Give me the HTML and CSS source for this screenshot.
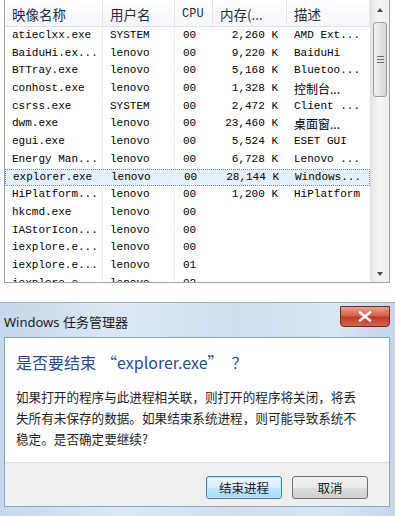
FILE: index.html
```html
<!DOCTYPE html>
<html lang="zh-CN">
<head>
    <meta charset="UTF-8">
    <meta name="viewport" content="width=device-width, initial-scale=1.0">
    <title>Windows 任务管理器</title>
    <link rel="stylesheet" href="styles.css">
</head>
<body>
    <!-- Process list -->
    <div class="process-list">
        <div class="grid">
            <div class="row header">
                <div class="cell">映像名称</div>
                <div class="cell">用户名</div>
                <div class="cell">CPU</div>
                <div class="cell">内存(...</div>
                <div class="cell">描述</div>
            </div>
            <div class="row"><div class="cell name">atieclxx.exe</div><div class="cell user">SYSTEM</div><div class="cell cpu">00</div><div class="cell mem">2,260 K</div><div class="cell desc">AMD Ext...</div></div>
            <div class="row"><div class="cell name">BaiduHi.ex...</div><div class="cell user">lenovo</div><div class="cell cpu">00</div><div class="cell mem">9,220 K</div><div class="cell desc">BaiduHi</div></div>
            <div class="row"><div class="cell name">BTTray.exe</div><div class="cell user">lenovo</div><div class="cell cpu">00</div><div class="cell mem">5,168 K</div><div class="cell desc">Bluetoo...</div></div>
            <div class="row"><div class="cell name">conhost.exe</div><div class="cell user">lenovo</div><div class="cell cpu">00</div><div class="cell mem">1,328 K</div><div class="cell desc cjk">控制台...</div></div>
            <div class="row"><div class="cell name">csrss.exe</div><div class="cell user">SYSTEM</div><div class="cell cpu">00</div><div class="cell mem">2,472 K</div><div class="cell desc">Client ...</div></div>
            <div class="row"><div class="cell name">dwm.exe</div><div class="cell user">lenovo</div><div class="cell cpu">00</div><div class="cell mem">23,460 K</div><div class="cell desc cjk">桌面窗...</div></div>
            <div class="row"><div class="cell name">egui.exe</div><div class="cell user">lenovo</div><div class="cell cpu">00</div><div class="cell mem">5,524 K</div><div class="cell desc">ESET GUI</div></div>
            <div class="row"><div class="cell name">Energy Man...</div><div class="cell user">lenovo</div><div class="cell cpu">00</div><div class="cell mem">6,728 K</div><div class="cell desc">Lenovo ...</div></div>
            <div class="row selected"><div class="cell name">explorer.exe</div><div class="cell user">lenovo</div><div class="cell cpu">00</div><div class="cell mem">28,144 K</div><div class="cell desc">Windows...</div></div>
            <div class="row"><div class="cell name">HiPlatform...</div><div class="cell user">lenovo</div><div class="cell cpu">00</div><div class="cell mem">1,200 K</div><div class="cell desc">HiPlatform</div></div>
            <div class="row"><div class="cell name">hkcmd.exe</div><div class="cell user">lenovo</div><div class="cell cpu">00</div><div class="cell mem"></div><div class="cell desc"></div></div>
            <div class="row"><div class="cell name">IAStorIcon...</div><div class="cell user">lenovo</div><div class="cell cpu">00</div><div class="cell mem"></div><div class="cell desc"></div></div>
            <div class="row"><div class="cell name">iexplore.e...</div><div class="cell user">lenovo</div><div class="cell cpu">00</div><div class="cell mem"></div><div class="cell desc"></div></div>
            <div class="row"><div class="cell name">iexplore.e...</div><div class="cell user">lenovo</div><div class="cell cpu">01</div><div class="cell mem"></div><div class="cell desc"></div></div>
            <div class="row"><div class="cell name">iexplore.e...</div><div class="cell user">lenovo</div><div class="cell cpu">02</div><div class="cell mem"></div><div class="cell desc"></div></div>
        </div>

        <!-- Vertical scrollbar -->
        <div class="scrollbar">
            <div class="arrow up"></div>
            <div class="thumb"><span></span><span></span><span></span></div>
            <div class="arrow down"></div>
        </div>
    </div>

    <!-- End process confirmation dialog -->
    <div class="dialog">
        <div class="titlebar">
            <span class="title">Windows 任务管理器</span>
            <div class="close-btn">
                <svg width="14" height="11" viewBox="0 0 14 11">
                    <path d="M2 1.5 L12 9.5 M12 1.5 L2 9.5" stroke="#fff" stroke-width="2.6" stroke-linecap="round"/>
                </svg>
            </div>
        </div>
        <div class="panel">
            <div class="content">
                <h1 class="instruction">是否要结束<span class="q-open">“</span>explorer.exe<span class="q-close">”</span>？</h1>
                <p class="message">如果打开的程序与此进程相关联，则打开的程序将关闭，将丢<br>失所有未保存的数据。如果结束系统进程，则可能导致系统不<br>稳定。是否确定要继续?</p>
            </div>
            <div class="footer">
                <button class="btn default">结束进程</button>
                <button class="btn">取消</button>
            </div>
        </div>
    </div>
</body>
</html>
```

FILE: styles.css
```css
/* page */
body {
    margin: 0;
    width: 395px;
    height: 516px;
    overflow: hidden;
    background: #fff;
    font-family: "Noto Sans", "Noto Sans CJK SC", sans-serif;
}

/* process list */
.process-list {
    display: flex;
    margin-left: 4px;
    width: 384px;
    height: 282px;
    border: 1px solid #9ea4ad;
    border-top: none;
    overflow: hidden;
}

.grid {
    width: 365px;
}

.row {
    display: grid;
    grid-template-columns: 98px 72px 38px 74px 83px;
    height: 17.7px;
    font-family: "Liberation Mono", "Noto Sans CJK SC", monospace;
    font-size: 11px;
    color: #000;
    box-sizing: border-box;
}

.cell {
    padding-left: 7px;
    white-space: nowrap;
    overflow: hidden;
    line-height: 17.7px;
}

.row .cell:nth-child(1),
.row .cell:nth-child(2) {
    border-right: 1px solid #efefef;
}

.cell.cpu {
    padding-left: 8px;
}

.cell.mem {
    text-align: right;
    padding-right: 9px;
    padding-left: 0;
}

.cell.cjk {
    font-family: "Noto Sans CJK SC", sans-serif;
    font-size: 12px;
}

.row.header {
    height: 27px;
    background: linear-gradient(#ffffff, #f4f6f9);
    border-bottom: 1px solid #dfe3e8;
    font-family: "Noto Sans CJK SC", sans-serif;
    font-size: 13.5px;
    color: #23293a;
}

.row.header .cell {
    line-height: 28px;
    border-right: 1px solid #e3e6ea;
}

.row.header .cell:nth-child(3) {
    font-family: "Liberation Mono", monospace;
    font-size: 12px;
}

.row.selected {
    background: #e6f0fb;
    border: 1px dotted #6f8fb8;
}

.row.selected .cell {
    line-height: 15.7px;
}

/* scrollbar */
.scrollbar {
    width: 19px;
    display: flex;
    flex-direction: column;
    align-items: center;
    background: linear-gradient(to right, #e6e6e6, #f4f4f4 40%, #efefef);
    border-left: 1px solid #e2e2e2;
}

.arrow {
    width: 0;
    height: 0;
    border-left: 3.5px solid transparent;
    border-right: 3.5px solid transparent;
}

.arrow.up {
    margin-top: 8px;
    border-bottom: 4px solid #4a4a4a;
}

.arrow.down {
    margin-top: auto;
    margin-bottom: 6px;
    border-top: 4px solid #4a4a4a;
}

.thumb {
    margin-top: 10px;
    width: 14px;
    height: 75px;
    box-sizing: border-box;
    border: 1px solid #9a9a9a;
    border-radius: 3px;
    background: linear-gradient(to right, #f2f2f2, #e4e4e4 50%, #d4d4d4);
    display: flex;
    flex-direction: column;
    align-items: center;
    justify-content: center;
    gap: 2px;
}

.thumb span {
    width: 7px;
    height: 1px;
    background: #6d6d6d;
}

/* dialog window */
.dialog {
    margin-top: 19px;
    height: 214px;
    box-sizing: border-box;
    padding: 0 5px 9px 4px;
    background: linear-gradient(to right, #c6d8ec, #dde8f4 30%, #cfdff0 60%, #d9e6f3 85%, #c4d6ea);
    border-top: 1px solid #9fb2c8;
}

.titlebar {
    height: 34px;
    display: flex;
    justify-content: space-between;
}

.title {
    padding-top: 9px;
    font-size: 13px;
    color: #1c1c1c;
}

.close-btn {
    margin-top: 3px;
    width: 50px;
    height: 21px;
    box-sizing: border-box;
    border: 1px solid #6e2a22;
    border-radius: 0 0 4px 4px;
    background: linear-gradient(#e9a393, #d2614c 45%, #c23b22 55%, #d4654c);
    display: flex;
    align-items: center;
    justify-content: center;
}

.panel {
    border: 1px solid #8fa3bc;
    background: #fff;
}

.content {
    height: 124px;
    padding: 13px 12px 0 11px;
    box-sizing: border-box;
}

.instruction {
    margin: 0;
    font-family: "Noto Sans CJK SC", sans-serif;
    font-size: 16px;
    font-weight: normal;
    line-height: 22px;
    color: #2a4b8d;
}

.q-open {
    margin-left: 5px;
}

.q-close {
    margin-right: 8px;
}

.message {
    margin: 13px 0 0;
    font-family: "Noto Sans CJK SC", sans-serif;
    font-size: 12.6px;
    line-height: 21px;
    color: #1e1e1e;
    white-space: nowrap;
}

.footer {
    height: 44px;
    box-sizing: border-box;
    background: #f0f0f0;
    border-top: 1px solid #dfdfdf;
    display: flex;
    justify-content: flex-end;
    gap: 10px;
    padding: 13px 21px 0 0;
}

.btn {
    width: 76px;
    height: 23px;
    padding: 0;
    border: 1px solid #707070;
    border-radius: 3px;
    background: linear-gradient(#f2f2f2, #ebebeb 50%, #dddddd 50%, #cfcfcf);
    font-family: "Noto Sans CJK SC", sans-serif;
    font-size: 12.5px;
    color: #1a1a1a;
}

.btn.default {
    border-color: #3c7fb1;
    background: linear-gradient(#eaf6fd, #d9f0fc 50%, #bee6fd 50%, #a7d9f5);
    box-shadow: inset 0 0 0 1px #c8e8fb;
}
```
